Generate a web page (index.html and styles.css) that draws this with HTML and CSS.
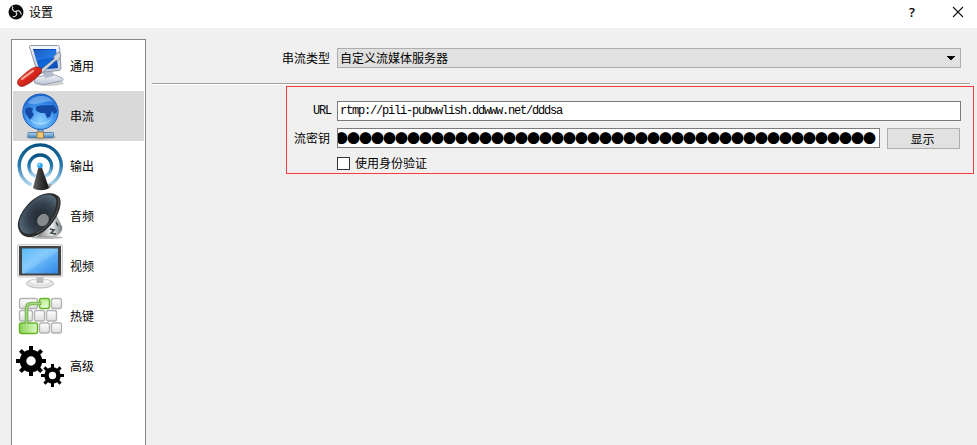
FILE: index.html
```html
<!DOCTYPE html>
<html lang="zh-CN">
<head>
<meta charset="utf-8">
<title>设置</title>
<link rel="stylesheet" href="styles.css">
</head>
<body>
<header class="titlebar">
  <svg class="logo" viewBox="0 0 16 16"><circle cx="8" cy="8" r="7.5" fill="#0b0b0d"/><g fill="none" stroke="#d8d8d8" stroke-width="1.2" stroke-linecap="round"><path d="M4.7 2.8C3.7 5.3 5.4 7.4 8 7.7"/><path d="M13.2 10.2C12.2 6.6 9.5 5.8 8 7.7"/><path d="M5.1 12.8C8.2 12.7 9.6 10.5 8 7.7"/></g></svg>
  <span class="title">设置</span>
  <span class="help">?</span>
  <svg class="close" viewBox="0 0 12 12"><path d="M1 1l10 10M11 1L1 11" stroke="#111" stroke-width="1.1"/></svg>
</header>
<main class="body">
  <nav class="sidebar">
    <div class="item">
      <svg class="icon" viewBox="0 0 54 50">
        <defs>
          <linearGradient id="scr" x2="1" y2="1"><stop stop-color="#053aa0"/><stop offset=".55" stop-color="#0f68dd"/><stop offset="1" stop-color="#0842a8"/></linearGradient>
          <linearGradient id="red" x2="1" y2="1"><stop stop-color="#ff8a78"/><stop offset=".45" stop-color="#dc2c20"/><stop offset="1" stop-color="#a30f0a"/></linearGradient>
          <linearGradient id="case" x2="0" y2="1"><stop stop-color="#f5f7fb"/><stop offset="1" stop-color="#bac3d4"/></linearGradient>
        </defs>
        <ellipse cx="36" cy="42" rx="15" ry="3" fill="#000" opacity=".18"/>
        <path d="M23 36l17-3 9 4c2 1 1 3-1 3l-18 4-9-3z" fill="url(#case)" stroke="#8992a5" stroke-width=".8"/>
        <path d="M29 31l10-1 2 5-9 2z" fill="#b3bccd"/>
        <path d="M17.500 4.500l27 0c1.500 0 2 .7 2 2L48 27c0 1.500-1 2-2 2.500l-20 2c-1.500 0-2-.5-2.200-2L16.500 6c0-1 0-1.500 1-1.500z" fill="url(#case)" stroke="#9099a9"/>
        <path d="M20 8l23 0 2 19-18.500 2z" fill="url(#scr)"/>
        <path d="M20.500 9l22 0 .8 8c-8-1-14 1-20.500 4z" fill="#4b9af4" opacity=".35"/>
        <path d="M25 31L41 18l0-3 5-4 2 3-2 5-4 1-14 13z" fill="#d2d7df" stroke="#757f8e" stroke-width=".8"/>
        <path d="M7 37C12 33 18 26 24 26c5 0 6 4 3 7-5 5-9 9-16 12-6 2-9-4-4-8z" fill="url(#red)" stroke="#8d1712" stroke-width=".7"/>
        <path d="M9 38l11-8" stroke="#ffb1a4" stroke-width="2" stroke-linecap="round"/>
      </svg><span>通用</span>
    </div>
    <div class="item selected">
      <svg class="icon" viewBox="0 0 54 50">
        <defs><radialGradient id="globe" cx=".5" cy=".75" r=".75"><stop stop-color="#8bd0ff"/><stop offset=".55" stop-color="#3e93ee"/><stop offset="1" stop-color="#1b61cc"/></radialGradient><linearGradient id="pipe" x2="0" y2="1"><stop stop-color="#b6d7f1"/><stop offset="1" stop-color="#4382b9"/></linearGradient></defs>
        <ellipse cx="28" cy="46" rx="15" ry="3" fill="#000" opacity=".15"/>
        <path d="M25 36h5v6h-5z" fill="#79addb" stroke="#3b6fa5" stroke-width=".7"/>
        <rect x="15" y="41.500" width="25.500" height="5" rx=".7" fill="url(#pipe)" stroke="#386fa8" stroke-width=".8"/>
        <rect x="24" y="41" width="6.500" height="6" fill="#f1c973" stroke="#9c743a" stroke-width=".9"/>
        <circle cx="27.500" cy="20.700" r="17.700" fill="url(#globe)" stroke="#1960be"/>
        <path d="M12 19c2-4 6-3 8-1l-1 3 2 2c-1 3-2 3-4 6-1-3-5-5-5-10zM23 16c6-3 11-1 17-2 3 2 4 4 4 7l-3 2-2-3-2 6-3 1-2-5-4 0c-3-1-6-2-5-6z" fill="#144aa3"/>
        <path d="M15 12c5-9 20-9 25-1-7-3-16 5-25 1z" fill="#b9e2ff" opacity=".42"/>
        <path d="M17 28c6 5 16 5 22-1-4 8-17 10-22 1z" fill="#c5edff" opacity=".45"/>
      </svg><span>串流</span>
    </div>
    <div class="item">
      <svg class="icon" viewBox="0 0 54 50">
        <defs><linearGradient id="wave" x2="0" y2="1"><stop stop-color="#075483"/><stop offset=".5" stop-color="#2677ac"/><stop offset="1" stop-color="#b3d9f0"/></linearGradient><linearGradient id="cone"><stop stop-color="#666"/><stop offset=".45" stop-color="#393939"/><stop offset="1" stop-color="#111"/></linearGradient></defs>
        <path d="M18.500 44A21 21 0 1 1 36 44" fill="none" stroke="url(#wave)" stroke-width="3.400"/>
        <path d="M22.500 35.500A11.300 11.300 0 1 1 32 35.500" fill="none" stroke="url(#wave)" stroke-width="3.400"/>
        <path d="M29 44l10-1-2 4-10 2z" fill="#999"/>
        <path d="M25.500 26h3.200L36 47c-4 3-12 3-16 0z" fill="url(#cone)"/>
        <circle cx="27" cy="24.500" r="2.800" fill="#31a8f5"/><circle cx="26.300" cy="23.700" r="1" fill="#a8e0ff"/>
      </svg><span>输出</span>
    </div>
    <div class="item">
      <svg class="icon" viewBox="0 0 54 50">
        <defs><radialGradient id="speaker" cx=".6" cy=".6" r=".65"><stop stop-color="#1e252c"/><stop offset=".55" stop-color="#333f4a"/><stop offset="1" stop-color="#566b7c"/></radialGradient><linearGradient id="metal"><stop stop-color="#777"/><stop offset=".6" stop-color="#eef1f1"/><stop offset="1" stop-color="#6e7878"/></linearGradient></defs>
        <ellipse cx="34" cy="46.500" rx="16" ry="1.500" fill="#000" opacity=".3"/>
        <path d="M43 24l6 12c0 5-3 8-7 9l-18 1z" fill="url(#metal)" stroke="#8a9090" stroke-width=".6"/>
        <path d="M37 38l4 1-3 3 5 1M43 31l2 4" stroke="#394446" stroke-width="1.600" fill="none"/>
        <path d="M5 36C3 26 17 5 33 2.500c7-1 12 1 14 5 3 9-6 29-23 37-9 4-17 1-19-8.500z" fill="#2c2d2e"/>
        <path d="M6.500 35C5 26 18 6 32 4c6-1 9 1 11 4 2 8-6 25-20 33-8 4-15 2-16.500-6z" fill="url(#speaker)"/>
        <ellipse cx="30" cy="29" rx="5.500" ry="6.500" transform="rotate(35 30 29)" fill="#86898c"/>
        <path d="M45.500 7c2 11-6 27-22 35" fill="none" stroke="#5a5c5d" stroke-width="1"/>
      </svg><span>音频</span>
    </div>
    <div class="item">
      <svg class="icon" viewBox="0 0 54 50">
        <defs><linearGradient id="tv" x2="1" y2="1"><stop stop-color="#3aaaf3"/><stop offset=".4" stop-color="#74c2fb"/><stop offset="1" stop-color="#2f86e6"/></linearGradient></defs>
        <ellipse cx="27" cy="42.500" rx="13.500" ry="4.500" fill="#e3e3e3" stroke="#b8b8b8"/>
        <ellipse cx="27" cy="40.500" rx="10" ry="2.500" fill="#f5f5f5"/>
        <path d="M23.500 35h7v7h-7z" fill="#bcbcbc"/>
        <rect x="4.500" y="3.500" width="45" height="32.500" rx="1.500" fill="#ededed" stroke="#cfcfcf"/>
        <rect x="6" y="5" width="42" height="29.500" fill="#444"/>
        <rect x="9" y="7.500" width="36" height="25" fill="url(#tv)"/>
        <path d="M9 7.500h36v3L11 32.500H9z" fill="#bde5ff" opacity=".24"/>
      </svg><span>视频</span>
    </div>
    <div class="item">
      <svg class="icon" viewBox="0 0 54 50">
        <defs><linearGradient id="key" x2="0" y2="1"><stop stop-color="#fff"/><stop offset="1" stop-color="#dedede"/></linearGradient><linearGradient id="green" x2="0" y2="1"><stop stop-color="#b9ec8f"/><stop offset="1" stop-color="#eaffda"/></linearGradient><linearGradient id="green-key"><stop stop-color="#8ad457"/><stop offset="1" stop-color="#ddfbc5"/></linearGradient></defs>
        <g fill="url(#key)" stroke="#b2b2b2" stroke-width="1.300"><rect x="6.500" y="7.500" width="18" height="10" rx="2"/><rect x="38.500" y="7.500" width="10" height="10" rx="2"/><rect x="6.500" y="19.500" width="13" height="10.500" rx="2"/><rect x="21.500" y="19.500" width="10" height="10.500" rx="2"/><rect x="33.500" y="19.500" width="10" height="10.500" rx="2"/><rect x="26.500" y="32" width="10" height="10" rx="2"/><rect x="38.500" y="32" width="10" height="10" rx="2"/></g>
        <g stroke="#67b52b" stroke-width="1.500"><rect x="26.500" y="7.500" width="10" height="10" rx="2" fill="url(#green)"/><rect x="6.500" y="32" width="18" height="10.500" rx="2" fill="url(#green-key)"/></g>
        <path d="M13.500 33V18c0-4 2-5.500 5-5.500h10" fill="none" stroke="#75b84c" stroke-width="3.600"/><path d="M13.500 33V18c0-4 2-5.500 5-5.500h10" fill="none" stroke="#a5d486" stroke-width="1.500"/>
      </svg><span>热键</span>
    </div>
    <div class="item">
      <svg class="icon" viewBox="0 0 54 50">
        <g fill="none" stroke="#000"><circle cx="18" cy="20" r="8" stroke-width="6.500"/><path d="M18 5v6M18 29v6M3 20h6M27 20h6M7.400 9.400l4.200 4.200M24.400 26.400l4.200 4.200M7.400 30.600l4.200-4.200M24.400 13.600l4.200-4.200" stroke-width="4"/>
        <circle cx="39.500" cy="34.500" r="6" stroke-width="4.600"/><path d="M39.500 23v4M39.500 42v4M28 34.500h4M47 34.500h4M31.400 26.400l3 3M44.600 39.600l3 3M31.400 42.600l3-3M44.600 29.400l3-3" stroke-width="3"/></g>
      </svg><span>高级</span>
    </div>
  </nav>
  <section class="content">
    <div class="row type-row">
      <label>串流类型</label>
      <div class="combo"><span>自定义流媒体服务器</span><svg class="arrow" viewBox="0 0 8 4"><path d="M0 0h8v1H7v1H6v1H5v1H3V3H2V2H1V1H0z"/></svg></div>
    </div>
    <div class="separator"></div>
    <div class="credentials">
      <div class="row"><label class="mono">URL</label><div class="field mono">rtmp://pili-pubwwlish.ddwww.net/dddsa</div></div>
      <div class="row key-row"><label>流密钥</label><div class="field secret"><span>●●●●●●●●●●●●●●●●●●●●●●●●●●●●●●●●●●●●●●●●●●●●●</span></div><div class="button">显示</div></div>
      <div class="auth"><i class="checkbox"></i><span>使用身份验证</span></div>
    </div>
  </section>
</main>
</body>
</html>
```
FILE: styles.css
```css
* { box-sizing: border-box; }
body {
  margin: 0;
  width: 977px;
  height: 445px;
  overflow: hidden;
  background: #f0f0f0;
  color: #000;
  font: 12px/18px "Noto Sans CJK SC", sans-serif;
  white-space: nowrap;
}
.titlebar {
  display: flex;
  align-items: center;
  height: 28px;
  padding: 0 13px 4px 8px;
  background: #fff;
}
.logo { width: 16px; height: 16px; }
.title { margin-left: 5px; }
.help { margin-left: auto; width: 7px; font: 600 13px/18px "Open Sans", sans-serif; }
.close { width: 12px; height: 12px; margin-left: 36px; }
.body { display: flex; height: 417px; padding: 11px 3px 0 11px; }
.sidebar {
  width: 135px;
  height: 420px;
  flex: none;
  padding: 1px;
  border: 1px solid #828790;
  background: #fff;
}
.item { display: flex; align-items: center; height: 50px; }
.selected { background: #d9d9d9; }
.icon { width: 54px; height: 50px; margin-right: 3px; }
.content { flex: 1; padding: 9px 0 0 6px; }
.row { display: flex; align-items: center; height: 20px; }
.row label { text-align: right; padding-right: 1px; margin-right: 6px; }
.type-row label { width: 179px; }
.combo {
  display: flex;
  align-items: center;
  justify-content: space-between;
  width: 624px;
  height: 20px;
  padding: 0 5px 0 2px;
  border: 1px solid #adadad;
  background: #e1e1e1;
}
.arrow { width: 8px; height: 4px; }
.separator {
  width: 818px;
  height: 2px;
  margin-top: 15px;
  background: #a0a0a0;
  border-bottom: 1px solid #fff;
}
.credentials {
  width: 688px;
  height: 88px;
  margin: 1px 0 0 134px;
  padding-top: 14px;
  border: 1px solid #fa3c3c;
}
.credentials label { width: 44px; }
.mono { font-family: "Liberation Mono", monospace; font-size: 12px; letter-spacing: -1.2px; }
.credentials label.mono { padding-right: 0; }
.field {
  width: 624px;
  height: 20px;
  padding-left: 2px;
  border: 1px solid #7a7a7a;
  background: #fff;
  overflow: hidden;
}
.key-row { height: 21px; margin-top: 7px; align-items: flex-start; }
.key-row label { padding-top: 1px; }
.secret { width: 543px; padding: 0; }
.secret span { display: block; margin-left: -3px; font-size: 13px; letter-spacing: -1px; }
.button {
  width: 73px;
  height: 21px;
  margin-left: 7px;
  padding: 1px 2px 0 0;
  border: 1px solid #adadad;
  background: #e1e1e1;
  text-align: center;
}
.auth { display: flex; align-items: center; height: 18px; margin: 5px 0 0 50px; }
.checkbox { width: 13px; height: 13px; margin-right: 5px; border: 1px solid #333; background: #fff; }
```
